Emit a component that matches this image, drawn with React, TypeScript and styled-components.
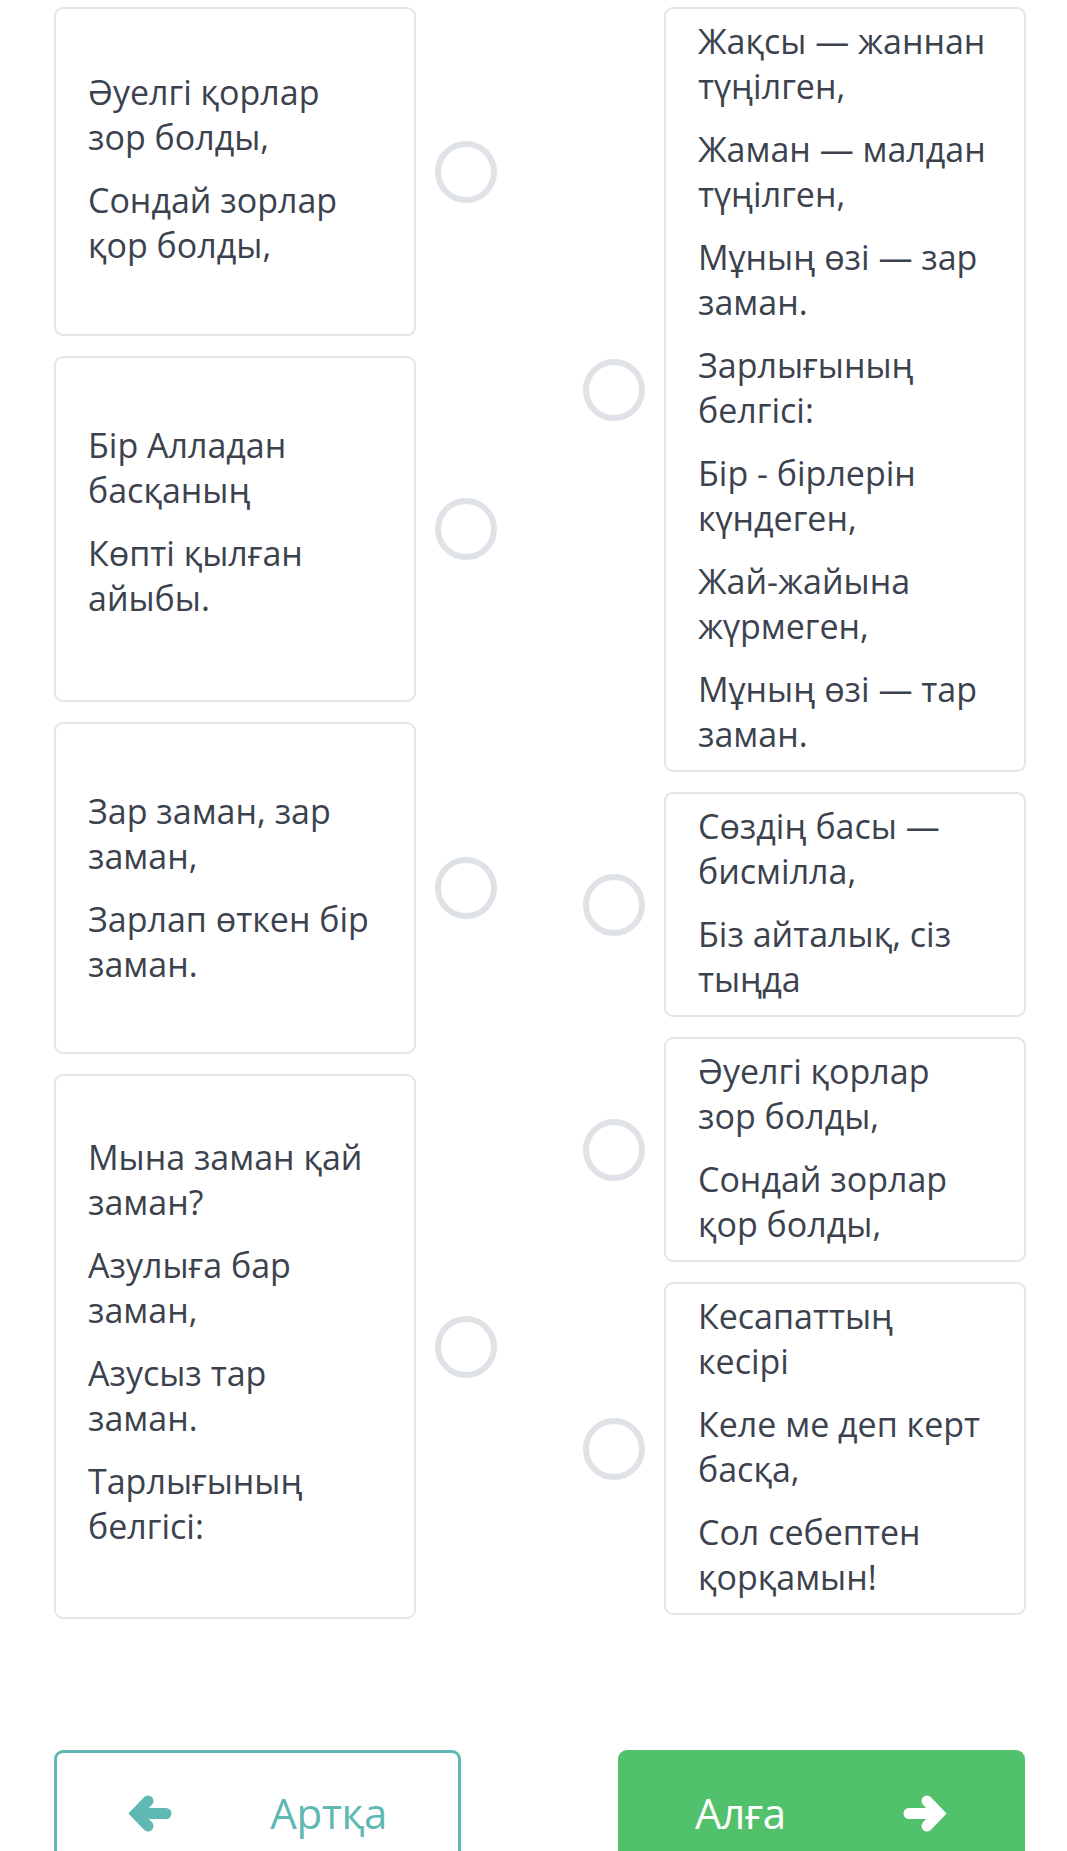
import React from "react";
import styled, { createGlobalStyle } from "styled-components";

const Global = createGlobalStyle`
  html, body {
    margin: 0;
    padding: 0;
    background: #ffffff;
    overflow: hidden;
  }
  body {
    font-family: "Open Sans", "Noto Sans", sans-serif;
    color: #3d4450;
  }
`;

const Page = styled.div`
  width: 1067px;
  box-sizing: border-box;
  padding: 7px 42px 0 54px;
`;

const Board = styled.div`
  display: grid;
  grid-template-columns: 443px 443px;
  column-gap: 86px;
  align-items: start;
`;

const Column = styled.div`
  display: flex;
  flex-direction: column;
  gap: 20px;
`;

const Row = styled.div`
  display: flex;
  align-items: center;
  gap: 19px;
`;

const Card = styled.div<{ $height?: number; $padBottom?: number; $centered?: boolean }>`
  box-sizing: border-box;
  width: 362px;
  flex: none;
  border: 2.5px solid #e3e6e9;
  border-radius: 9px;
  background: #fff;
  display: flex;
  flex-direction: column;
  justify-content: ${(p) => (p.$centered ? "center" : "flex-start")};
  gap: 18px;
  height: ${(p) => (p.$height ? `${p.$height}px` : "auto")};
  padding: ${(p) =>
    p.$centered ? `0 12px ${p.$padBottom ?? 0}px 32px` : "10px 12px 13px 32px"};
`;

const Verse = styled.p`
  margin: 0;
  font-size: 34px;
  line-height: 45px;
  white-space: nowrap;
  color: #3b424e;
`;

const Radio = styled.span`
  box-sizing: border-box;
  flex: none;
  width: 62px;
  height: 62px;
  border-radius: 50%;
  border: 6px solid #dfe3e7;
  background: #fff;
`;

const Footer = styled.div`
  display: flex;
  justify-content: space-between;
  margin-top: 131px;
`;

const NavButton = styled.button<{ $primary?: boolean }>`
  box-sizing: border-box;
  width: 407px;
  height: 126px;
  border-radius: 9px;
  border: 3px solid ${(p) => (p.$primary ? "#52c16b" : "#5fb8b3")};
  background: ${(p) => (p.$primary ? "#52c16b" : "#ffffff")};
  color: ${(p) => (p.$primary ? "#ffffff" : "#5fb8b3")};
  display: flex;
  align-items: center;
  justify-content: space-between;
  padding: ${(p) => (p.$primary ? "0 75px 0 74px" : "0 71px 0 71px")};
  font-family: "Open Sans", "Noto Sans", sans-serif;
  font-size: 42px;
  line-height: 1;
  cursor: pointer;
`;

const Label = styled.span`
  display: block;
  letter-spacing: -0.3px;
`;

const Arrow = ({ dir }: { dir: "left" | "right" }) => (
  <svg
    width="44"
    height="37"
    viewBox="0 0 44 37"
    style={dir === "right" ? { transform: "scaleX(-1)" } : undefined}
    aria-hidden="true"
  >
    <g
      fill="none"
      stroke="currentColor"
      strokeWidth="11"
      strokeLinecap="round"
      strokeLinejoin="miter"
    >
      <path d="M20 6 L8 18.5 L20 31" />
      <path d="M11 18.5 L38 18.5" />
    </g>
  </svg>
);

type Item = { lines: string[][]; height?: number; padBottom?: number };

const leftItems: Item[] = [
  {
    height: 329,
    padBottom: 5,
    lines: [
      ["Әуелгі қорлар", "зор болды,"],
      ["Сондай зорлар", "қор болды,"],
    ],
  },
  {
    height: 346,
    padBottom: 15,
    lines: [
      ["Бір Алладан", "басқаның"],
      ["Көпті қылған", "айыбы."],
    ],
  },
  {
    height: 332,
    lines: [
      ["Зар заман, зар", "заман,"],
      ["Зарлап өткен бір", "заман."],
    ],
  },
  {
    height: 545,
    padBottom: 10,
    lines: [
      ["Мына заман қай", "заман?"],
      ["Азулыға бар", "заман,"],
      ["Азусыз тар", "заман."],
      ["Тарлығының", "белгісі:"],
    ],
  },
];

const rightItems: Item[] = [
  {
    lines: [
      ["Жақсы — жаннан", "түңілген,"],
      ["Жаман — малдан", "түңілген,"],
      ["Мұның өзі — зар", "заман."],
      ["Зарлығының", "белгісі:"],
      ["Бір - бірлерін", "күндеген,"],
      ["Жай-жайына", "жүрмеген,"],
      ["Мұның өзі — тар", "заман."],
    ],
  },
  {
    lines: [
      ["Сөздің басы —", "бисмілла,"],
      ["Біз айталық, сіз", "тыңда"],
    ],
  },
  {
    lines: [
      ["Әуелгі қорлар", "зор болды,"],
      ["Сондай зорлар", "қор болды,"],
    ],
  },
  {
    lines: [
      ["Кесапаттың", "кесірі"],
      ["Келе ме деп керт", "басқа,"],
      ["Сол себептен", "қорқамын!"],
    ],
  },
];

const Verses = ({ lines }: { lines: string[][] }) => (
  <>
    {lines.map((pair, i) => (
      <Verse key={i}>
        {pair[0]}
        <br />
        {pair[1]}
      </Verse>
    ))}
  </>
);

export default function App() {
  return (
    <>
      <Global />
      <Page>
        <Board>
          <Column>
            {leftItems.map((item, i) => (
              <Row key={i}>
                <Card $centered $height={item.height} $padBottom={item.padBottom}>
                  <Verses lines={item.lines} />
                </Card>
                <Radio />
              </Row>
            ))}
          </Column>
          <Column>
            {rightItems.map((item, i) => (
              <Row key={i}>
                <Radio />
                <Card>
                  <Verses lines={item.lines} />
                </Card>
              </Row>
            ))}
          </Column>
        </Board>
        <Footer>
          <NavButton type="button">
            <Arrow dir="left" />
            <Label>Артқа</Label>
          </NavButton>
          <NavButton type="button" $primary>
            <Label>Алға</Label>
            <Arrow dir="right" />
          </NavButton>
        </Footer>
      </Page>
    </>
  );
}
